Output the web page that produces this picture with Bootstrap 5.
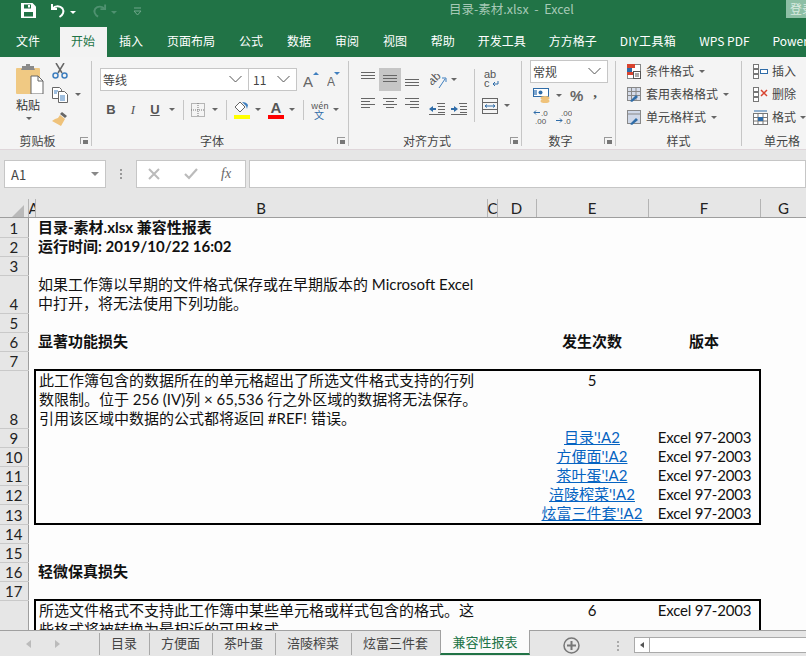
<!DOCTYPE html>
<html lang="zh">
<head>
<meta charset="utf-8">
<title>目录-素材.xlsx - Excel</title>
<link href="https://cdn.jsdelivr.net/npm/bootstrap@5.3.0/dist/css/bootstrap.min.css" rel="stylesheet">
<style>
html,body{margin:0;height:100%;overflow:hidden;background:#e6e6e6}
body{font-family:"Noto Sans CJK SC","Liberation Sans",sans-serif;font-size:12px;color:#444}
svg{display:block;flex:none}
.app{width:806px;height:656px;overflow:hidden}
.titlebar{height:27px;background:#217346;position:relative}
.qat{padding:3px 0 0 21px}
.doc-title{position:absolute;left:449px;top:0;line-height:18px;font-size:12.5px;color:#a6c9b6;white-space:pre}
.login-btn{position:absolute;right:0;top:0;width:20px;height:18px;background:#8dbfa5;color:#d9ebe1;line-height:18px;padding-left:4px;overflow:hidden;font-size:12px;white-space:nowrap}
.cr{display:inline-block;flex:none;width:0;height:0;border-left:3px solid transparent;border-right:3px solid transparent;border-top:3px solid #666}
.cr-w{border-top-color:#fff}
.cr-d{border-top-color:#4f9170}
.tabbar{height:30px;background:#217346}
.rtab{padding:0 12px;color:#fff;line-height:28px;white-space:nowrap;height:30px}
.rtab-t{padding:0 11.5px}
.rtab-l{letter-spacing:.4px}
.rtab-on{background:#f3f3f3;color:#217346;margin-left:8px;padding:0 12px 0 11px}
.rtab-first{margin-left:4px}
.ribbon{height:94px;background:#f4f4f4;border-bottom:1px solid #dfd6da;padding-top:4px;overflow:hidden}
.rg{height:85px;border-right:1px solid #c6c6c6;flex:none}
.rg-body{height:71px;flex:none}
.rg-label{height:18px;line-height:18px;font-size:12px;color:#444;flex:none}
.rg-text{flex:1;text-align:center;padding-right:5px;white-space:nowrap}
.launch{width:8px;height:7px;margin:0 3px 0 0;border-left:1px solid #999;border-top:1px solid #999;position:relative;align-self:center}
.launch::after{content:"";position:absolute;right:0;bottom:0;width:5px;height:4px;background:#777}
.g-clip{width:92px}.g-font{width:257px}.g-align{width:173px}.g-num{width:94px}.g-style{width:126px}.g-cell{width:80px;border-right:0}
.paste-col{width:46px;padding:3px 0 0 16px}
.paste-text{width:26px;text-align:center;margin-top:3px;margin-left:-1px;line-height:16px;color:#333}
.clip-col{padding:2px 0 0 6px;gap:8px}
.combo{height:23px;background:#fff;border:1px solid #c6c6c6;font-size:12px;line-height:21px;padding:0 2px;color:#444}
.font-name{width:149px}
.font-size{width:49px;margin-left:-1px}
.fmt-btn{width:22px;height:20px;font-size:13px;color:#555}
.vsep{width:1px;background:#c6c6c6;flex:none}
.al-row{height:23px}
.al-btn{width:22px;height:23px}
.al-on{background:#c6c6c6}
.num-combo{width:78px;height:23px;margin:-1px 0 0 8px}
.sty-row{height:23px;padding-left:11px;gap:5px;white-space:nowrap;color:#444}
.cel-row{padding-left:11px;gap:4px}
.fbar{height:49px;padding:10px 0 0 4px;background:#e6e6e6}
.fbox{height:28px;background:#fff;border:1px solid #c6c6c6}
.name-box{width:102px;padding:0 6px;font-size:13px;color:#444}
.grip{width:2px;height:10px;margin:0 14px;background:repeating-linear-gradient(#999 0 2px,transparent 2px 4px)}
.fx-box{width:110px;padding-left:11px;gap:0}
.fx-btn{width:36px}
.fx-txt{font-family:"Liberation Serif",serif;font-style:italic;font-size:14px;color:#666;line-height:26px;padding-left:1px}
.fx-input{flex:1;margin-left:3px}
.sheet-wrap{height:431px;overflow:hidden;background:#e6e6e6;flex:none}
.xgrid{table-layout:fixed;width:807px;background:#fdfdfd;font-family:Lato,"Noto Sans CJK SC",sans-serif;font-size:15px;color:#111;line-height:19px}
.xgrid th{background:#e6e6e6;font-weight:400;text-align:center;padding:0;color:#222;overflow:hidden;white-space:nowrap}
.xhead th{height:18px;line-height:18px;border-bottom:1px solid #9e9e9e;border-right:1px solid #b4b4b4;vertical-align:bottom}
.xgrid tbody th{border-right:1px solid #9e9e9e;border-bottom:1px solid #c9c9c9;vertical-align:bottom;line-height:18px}
.xgrid td{padding:0 3px;height:19px;vertical-align:bottom;white-space:nowrap;overflow:hidden}
.xgrid td.t{vertical-align:top;padding-top:0}
.xgrid td.c{text-align:center;padding:0}
.xgrid td.ver{letter-spacing:-.2px;padding-left:2px}
.xgrid a{color:#0563c1}
.xgrid .b{font-weight:700}
.h38>*{height:38px!important}
.h56>*{height:56px!important}
.h18>*{height:18px!important}
.bl{border-left:2px solid #000}
.br{border-right:2px solid #000}
.bt{border-top:2px solid #000}
.bb{border-bottom:2px solid #000}
.sheetbar{height:26px;background:#e6e6e6;border-top:1px solid #a0a0a0;font-size:13px;color:#444;flex:none}
.nav-arrows{width:100px;padding-left:26px;gap:24px;border-right:1px solid #a8a8a8;height:22px;margin-top:2px}
.stab{padding:0 12px 0 11px;height:22px;margin-top:2px;line-height:20px;border-right:1px solid #a8a8a8;white-space:nowrap}
.stab-on{background:#fbfbfb;color:#217346;margin-top:-1px;height:25px;border-left:1px solid #a0a0a0;border-right:1px solid #a0a0a0;border-bottom:2px solid #217346;line-height:24px;padding:0 11.5px;margin-left:-1px;margin-bottom:1px}
.plus-wrap{padding-left:33px;padding-top:6px}
.sgrip{width:2px;height:10px;margin:10px 15px 0 37px;background:repeating-linear-gradient(#aaa 0 2px,transparent 2px 4px)}
.sc-arrow{width:16px;height:16px;margin-top:6px;background:#fff;border:1px solid #aaa;padding-left:5px}
.sc-arrow i{display:block;width:0;height:0;border-top:3px solid transparent;border-bottom:3px solid transparent;border-right:4px solid #555;margin-top:4px}
.sc-track{flex:1;height:16px;margin-top:6px;background:#fff;border:1px solid #aaa;border-left:0;border-right:0}
</style>
</head>
<body>
<div class="app d-flex flex-column">

  <!-- title bar -->
  <div class="titlebar flex-none">
    <div class="qat d-flex align-items-start">
      <svg width="15" height="15" viewBox="0 0 15 15"><path fill="#fff" d="M0 0h11.500L15 3.500V15H0z"/><rect x="3" y="1.500" width="7" height="4" fill="#217346"/><rect x="7" y="2" width="2" height="2.500" fill="#fff"/><rect x="3" y="9" width="9" height="4.500" fill="#217346"/></svg>
      <svg style="margin-left:14px" width="16" height="15" viewBox="0 0 16 15" fill="none" stroke="#fff" stroke-width="2"><path d="M2 1v5h5"/><path d="M2.500 6C5 2.500 10 2.500 12.500 5.500 14.500 8.500 13 12 9.500 14"/></svg>
      <span class="cr cr-w mt-2 ms-1"></span>
      <svg class="ms-3" width="15" height="15" viewBox="0 0 16 15" fill="none" stroke="#4f9170" stroke-width="2"><path d="M14 1v5H9"/><path d="M13.500 6C11 2.500 6 2.500 3.500 5.500 1.500 8.500 3 12 6.500 14"/></svg>
      <span class="cr cr-d mt-2 ms-1"></span>
      <svg class="ms-3 mt-1" width="9" height="9" viewBox="0 0 9 9"><path d="M1 1h7" stroke="#6fa68a" stroke-width="1"/><path d="M1 4h7L4.500 8z" fill="none" stroke="#6fa68a"/></svg>
    </div>
    <div class="doc-title">目录-素材.xlsx  -  Excel</div>
    <div class="login-btn">登录</div>
  </div>

  <!-- ribbon tabs -->
  <div class="tabbar d-flex flex-none">
    <div class="rtab rtab-first">文件</div>
    <div class="rtab rtab-on">开始</div>
    <div class="rtab">插入</div>
    <div class="rtab">页面布局</div>
    <div class="rtab">公式</div>
    <div class="rtab">数据</div>
    <div class="rtab">审阅</div>
    <div class="rtab">视图</div>
    <div class="rtab rtab-t">帮助</div>
    <div class="rtab rtab-t">开发工具</div>
    <div class="rtab rtab-t">方方格子</div>
    <div class="rtab rtab-t rtab-l">DIY工具箱</div>
    <div class="rtab rtab-t">WPS PDF</div>
    <div class="rtab rtab-t">Power</div>
  </div>

  <!-- ribbon -->
  <div class="ribbon d-flex flex-none">

    <!-- clipboard -->
    <div class="rg g-clip d-flex flex-column">
      <div class="rg-body d-flex">
        <div class="paste-col d-flex flex-column">
          <svg width="28" height="30" viewBox="0 0 28 30"><rect x="0" y="4" width="24" height="26" rx="1" fill="#f0c983"/><path d="M6 4V2h4V0h4v2h4v2l1 2H5z" fill="#8a8a8a"/><path d="M15 12h7l5 5v13H15z" fill="#fff" stroke="#666"/><path d="M22 12v5h5" fill="none" stroke="#666"/></svg>
          <div class="paste-text">粘贴</div>
          <span class="cr mt-1" style="margin-left:10px"></span>
        </div>
        <div class="clip-col d-flex flex-column">
          <svg width="16" height="16" viewBox="0 0 16 16" fill="none"><path d="M4 0l6 10M12 0L6 10" stroke="#666" stroke-width="1.500"/><circle cx="3.500" cy="12.500" r="2.500" stroke="#3f7fbf" stroke-width="1.500"/><circle cx="12.500" cy="12.500" r="2.500" stroke="#3f7fbf" stroke-width="1.500"/></svg>
          <div class="d-flex align-items-center">
            <svg width="16" height="16" viewBox="0 0 16 16" fill="#fff" stroke="#666"><path d="M.5.500h7l2 2v9h-9z"/><path d="M6.500 4.500h6l3 3v8h-9z"/><path d="M8 9h5M8 11h5M8 13h5M2 4h4M2 6h3" stroke="#3f7fbf"/></svg>
            <span class="cr" style="margin-left:7px"></span>
          </div>
          <svg width="17" height="15" viewBox="0 0 17 15"><path d="M10 1l5 4-2 2-5-4z" fill="#666"/><path d="M8 4l5 4-4 7-9-5 3-2 3-1z" fill="#efc27a"/></svg>
        </div>
      </div>
      <div class="rg-label d-flex"><span class="rg-text">剪贴板</span><span class="launch"></span></div>
    </div>

    <!-- font -->
    <div class="rg g-font d-flex flex-column">
      <div class="rg-body" style="padding:7px 0 0 8px">
        <div class="d-flex align-items-center">
          <div class="combo font-name d-flex justify-content-between align-items-center"><span>等线</span><svg class="me-1" width="13" height="8" viewBox="0 0 13 8" fill="none" stroke="#555"><path d="M.5 1l6 6 6-6"/></svg></div>
          <div class="combo font-size d-flex justify-content-between align-items-center"><span style="padding-left:2px">11</span><svg class="me-1" width="13" height="8" viewBox="0 0 13 8" fill="none" stroke="#555"><path d="M.5 1l6 6 6-6"/></svg></div>
          <svg style="margin-left:6px" width="16" height="17" viewBox="0 0 16 17"><text x="0" y="16" font-size="15" font-family="Liberation Sans" fill="#666">A</text><path d="M10 4l3-3 3 3z" fill="#3f7fbf"/></svg>
          <svg style="margin-left:8px" width="13" height="15" viewBox="0 0 13 15"><text x="0" y="14" font-size="12" font-family="Liberation Sans" fill="#666">A</text><path d="M7 0h6l-3 3z" fill="#3f7fbf"/></svg>
        </div>
        <div class="d-flex align-items-center" style="margin-top:9px;height:20px">
          <div class="fmt-btn text-center fw-bold" style="font-family:'Liberation Sans'">B</div>
          <div class="fmt-btn text-center fst-italic" style="font-family:'Liberation Serif'">I</div>
          <div class="fmt-btn text-center text-decoration-underline" style="font-family:'Liberation Sans';font-weight:700">U</div>
          <span class="cr" style="margin-left:3px"></span>
          <span class="vsep" style="height:20px;margin:0 7px 0 8px"></span>
          <svg width="14" height="14" viewBox="0 0 14 14" fill="none" stroke="#777" stroke-dasharray="1 1"><rect x=".5" y=".5" width="13" height="13"/><path d="M7 0v14M0 7h14"/></svg>
          <span class="cr" style="margin-left:7px"></span>
          <span class="vsep" style="height:20px;margin:0 7px 0 8px"></span>
          <div style="width:16px">
            <svg width="16" height="14" viewBox="0 0 16 14"><path d="M6 1L1 6l5 5 5-5z" fill="#fff" stroke="#666"/><path d="M8 1c3 0 5 1 6 3l-1 4-1-3z" fill="#3f7fbf"/></svg>
            <div style="height:4px;background:#ff0"></div>
          </div>
          <span class="cr" style="margin-left:5px"></span>
          <div class="text-center" style="width:16px;margin-left:7px;line-height:14px">
            <div class="fw-bold" style="font-family:'Liberation Sans';font-size:15px;color:#555;height:14px">A</div>
            <div style="height:4px;background:#f00"></div>
          </div>
          <span class="cr" style="margin-left:5px"></span>
          <span class="vsep" style="height:20px;margin:0 7px 0 8px"></span>
          <div class="text-center" style="width:16px;line-height:9px;font-size:9px;color:#555"><div>wén</div><div style="color:#2f6ca8;font-size:10px">文</div></div>
          <span class="cr" style="margin-left:6px"></span>
        </div>
      </div>
      <div class="rg-label d-flex"><span class="rg-text">字体</span><span class="launch"></span></div>
    </div>

    <!-- alignment -->
    <div class="rg g-align d-flex flex-column">
      <div class="rg-body d-flex" style="padding:7px 0 0 8px">
        <div style="width:117px">
          <div class="al-row d-flex align-items-center">
            <div class="al-btn d-flex justify-content-center"><svg class="mt-1" width="14" height="8" viewBox="0 0 14 8" stroke="#666"><path d="M0 .5h14M0 3.500h14M0 6.500h14"/></svg></div>
            <div class="al-btn al-on d-flex justify-content-center align-items-center"><svg width="14" height="8" viewBox="0 0 14 8" stroke="#666"><path d="M0 .5h14M0 3.500h14M0 6.500h14"/></svg></div>
            <div class="al-btn d-flex justify-content-center align-items-end pb-1"><svg width="14" height="8" viewBox="0 0 14 8" stroke="#666"><path d="M0 .5h14M0 3.500h14M0 6.500h14"/></svg></div>
            <svg style="margin-left:7px;margin-top:4px" width="17" height="15" viewBox="0 0 17 15"><text transform="translate(2 12) rotate(-45)" font-size="12" font-family="Liberation Sans" fill="#555">ab</text><path d="M9 14L15 5M12 4l4 0 0 4" fill="none" stroke="#3f7fbf"/></svg>
            <span class="cr" style="margin-left:4px"></span>
          </div>
          <div class="al-row d-flex align-items-center" style="margin-top:7px">
            <div class="al-btn d-flex justify-content-center"><svg width="14" height="11" viewBox="0 0 14 11" stroke="#666"><path d="M0 .5h14M0 3.500h9M0 6.500h14M0 9.500h9"/></svg></div>
            <div class="al-btn d-flex justify-content-center"><svg width="14" height="11" viewBox="0 0 14 11" stroke="#666"><path d="M0 .5h14M3 3.500h8M0 6.500h14M3 9.500h8"/></svg></div>
            <div class="al-btn d-flex justify-content-center"><svg width="14" height="11" viewBox="0 0 14 11" stroke="#666"><path d="M0 .5h14M5 3.500h9M0 6.500h14M5 9.500h9"/></svg></div>
            <svg style="margin-left:6px" width="16" height="12" viewBox="0 0 16 12"><path d="M0 6l4-3v2h3v2H4v2z" fill="#2f6ca8"/><path d="M8 .5h8M9 3.500h7M9 6.500h7M9 9.500h7M0 11.500h16" stroke="#666"/></svg>
            <svg style="margin-left:6px" width="16" height="12" viewBox="0 0 16 12"><path d="M7 6L3 3v2H0v2h3v2z" fill="#2f6ca8"/><path d="M8 .5h8M9 3.500h7M9 6.500h7M9 9.500h7M0 11.500h16" stroke="#666"/></svg>
          </div>
        </div>
        <span class="vsep" style="height:53px;margin:1px 7px 0 0"></span>
        <div style="width:30px">
          <div style="font-family:'Liberation Sans';font-size:11px;line-height:9px;color:#555;height:23px;padding:2px 0 0 2px">ab<div class="d-flex"><span>c</span><svg style="margin:2px 0 0 2px" width="7" height="6" viewBox="0 0 7 6" fill="none" stroke="#2f6ca8"><path d="M6 0v3H1M3 1L1 3l2 2"/></svg></div></div>
          <div class="d-flex align-items-center" style="margin-top:7px">
            <svg width="16" height="16" viewBox="0 0 16 16" fill="none" stroke="#666"><rect x=".5" y=".5" width="15" height="15"/><path d="M0 4.500h16M0 11.500h16"/><path d="M3 8h10M3 8l2-1.500M3 8l2 1.500M13 8l-2-1.500M13 8l-2 1.500" stroke="#2f6ca8"/></svg>
            <span class="cr" style="margin-left:6px"></span>
          </div>
        </div>
      </div>
      <div class="rg-label d-flex"><span class="rg-text">对齐方式</span><span class="launch"></span></div>
    </div>

    <!-- number -->
    <div class="rg g-num d-flex flex-column">
      <div class="rg-body">
        <div class="combo num-combo d-flex justify-content-between align-items-center"><span>常规</span><svg class="me-1" width="13" height="8" viewBox="0 0 13 8" fill="none" stroke="#555"><path d="M.5 1l6 6 6-6"/></svg></div>
        <div class="d-flex align-items-center" style="padding-left:11px;height:20px;margin-top:3px">
          <svg width="17" height="17" viewBox="0 0 17 17"><rect x=".5" y="1.500" width="15" height="8" fill="#fff" stroke="#2f6ca8"/><circle cx="7.500" cy="5.500" r="2" fill="#2f6ca8"/><rect x="1" y="3" width="3" height="5" fill="#7ea6cf"/><ellipse cx="12" cy="11" rx="4.500" ry="2" fill="#efc27a"/><ellipse cx="12" cy="14" rx="4.500" ry="2" fill="#efc27a"/></svg>
          <span class="cr" style="margin-left:6px"></span>
          <span class="fw-bold" style="font-family:'Liberation Sans';font-size:15px;color:#666;margin-left:8px">%</span>
          <span class="fw-bold" style="font-family:'Liberation Serif';font-size:15px;color:#555;margin:-8px 0 0 10px">,</span>
        </div>
        <div class="d-flex align-items-center" style="padding-left:11px;height:18px;margin-top:2px">
          <svg width="16" height="16" viewBox="0 0 16 16" font-family="Liberation Sans" font-size="8" fill="#555"><path d="M7 3.500H1M1 3.500l2-2M1 3.500l2 2" fill="none" stroke="#2f6ca8"/><text x="8" y="6.500">.0</text><text x="2" y="15">.00</text></svg>
          <svg style="margin-left:7px" width="16" height="16" viewBox="0 0 16 16" font-family="Liberation Sans" font-size="8" fill="#555"><text x="5" y="6.500">.00</text><text x="8" y="15">.0</text><path d="M0 11.500h6M6 11.500l-2-2M6 11.500l-2 2" fill="none" stroke="#2f6ca8"/></svg>
        </div>
      </div>
      <div class="rg-label d-flex"><span class="rg-text">数字</span><span class="launch"></span></div>
    </div>

    <!-- styles -->
    <div class="rg g-style d-flex flex-column">
      <div class="rg-body">
        <div class="sty-row d-flex align-items-center" style="margin-top:-1px">
          <svg width="14" height="15" viewBox="0 0 14 15"><rect x=".5" y=".5" width="13" height="14" fill="#fff" stroke="#888"/><rect y="0" width="8" height="4" fill="#d8432f"/><rect y="4" width="5" height="4" fill="#2f6ca8"/><rect y="8" width="6" height="3" fill="#d8432f"/><rect x="6.500" y="7.500" width="7" height="7" fill="#fff" stroke="#555"/><path d="M8 10h4M8 12h4" stroke="#555"/></svg>
          <span>条件格式</span><span class="cr"></span>
        </div>
        <div class="sty-row d-flex align-items-center">
          <svg width="14" height="15" viewBox="0 0 14 15" fill="none" stroke="#888"><rect x=".5" y=".5" width="13" height="13" fill="#d5dcea"/><path d="M0 4.500h14M0 8.500h14M4.500 0v14M9 0v14"/><path d="M3 14l6-6 2 2-6 5z" fill="#2f6ca8" stroke="none"/></svg>
          <span>套用表格格式</span><span class="cr"></span>
        </div>
        <div class="sty-row d-flex align-items-center">
          <svg width="14" height="15" viewBox="0 0 14 15" fill="none" stroke="#888"><rect x=".5" y=".5" width="13" height="13" fill="#cfd8e8"/><path d="M0 4h14"/><path d="M3 14l6-6 2 2-6 5z" fill="#2f6ca8" stroke="none"/></svg>
          <span>单元格样式</span><span class="cr"></span>
        </div>
      </div>
      <div class="rg-label text-center">样式</div>
    </div>

    <!-- cells -->
    <div class="rg g-cell d-flex flex-column">
      <div class="rg-body">
        <div class="sty-row cel-row d-flex align-items-center" style="margin-top:-1px">
          <svg width="15" height="15" viewBox="0 0 15 15" fill="#fff" stroke="#777"><rect x=".5" y=".5" width="5" height="4"/><rect x=".5" y="10.500" width="5" height="4"/><rect x=".5" y="5.500" width="5" height="4"/><rect x="7.500" y="5.500" width="7" height="4" stroke="#2f6ca8"/></svg>
          <span>插入</span>
        </div>
        <div class="sty-row cel-row d-flex align-items-center">
          <svg width="15" height="15" viewBox="0 0 15 15" fill="#fff" stroke="#777"><rect x=".5" y=".5" width="5" height="4"/><rect x=".5" y="10.500" width="5" height="4"/><rect x=".5" y="5.500" width="5" height="4"/><path d="M8 3l6 6M14 3l-6 6" stroke="#d8432f" stroke-width="1.500"/></svg>
          <span>删除</span>
        </div>
        <div class="sty-row cel-row d-flex align-items-center">
          <svg width="15" height="15" viewBox="0 0 15 15" fill="#fff" stroke="#777"><rect x=".5" y="3.500" width="14" height="11"/><path d="M0 7.500h15M0 11h15M5 3v12M10 3v12"/><rect x="5" y="7" width="5" height="4" fill="#2f6ca8" stroke="none"/><path d="M1 1h13" stroke="#2f6ca8"/></svg>
          <span>格式</span><span class="cr"></span>
        </div>
      </div>
      <div class="rg-label text-center">单元格</div>
    </div>
  </div>

  <!-- formula bar -->
  <div class="fbar d-flex flex-none">
    <div class="fbox name-box d-flex justify-content-between align-items-center"><span>A1</span><span class="cr" style="border-left-width:4px;border-right-width:4px;border-top-width:4px;border-top-color:#888"></span></div>
    <span class="grip align-self-start" style="margin-top:9px"></span>
    <div class="fbox fx-box d-flex align-items-center">
      <div class="fx-btn"><svg width="12" height="12" viewBox="0 0 12 12" stroke="#bbb" stroke-width="2"><path d="M1 1l10 10M11 1L1 11"/></svg></div>
      <div class="fx-btn"><svg width="14" height="12" viewBox="0 0 14 12" fill="none" stroke="#bbb" stroke-width="2.200"><path d="M1 6l4 4 8-9"/></svg></div>
      <div class="fx-txt">fx</div>
    </div>
    <div class="fbox fx-input"></div>
  </div>

  <!-- worksheet -->
  <div class="sheet-wrap">
    <table class="xgrid">
      <colgroup>
        <col style="width:28px"><col style="width:7px"><col style="width:452px"><col style="width:10px"><col style="width:39px"><col style="width:112px"><col style="width:112px"><col style="width:47px">
      </colgroup>
      <thead>
        <tr class="xhead">
          <th><svg class="ms-auto me-1" width="12" height="12" viewBox="0 0 12 12"><path d="M12 0v12H0z" fill="#b9b9b9"/></svg></th>
          <th class="text-start">A</th><th>B</th><th>C</th><th>D</th><th>E</th><th>F</th><th>G</th>
        </tr>
      </thead>
      <tbody>
        <tr><th>1</th><td></td><td class="b">目录-素材.xlsx 兼容性报表</td><td></td><td></td><td></td><td></td><td></td></tr>
        <tr><th>2</th><td></td><td class="b">运行时间: 2019/10/22 16:02</td><td></td><td></td><td></td><td></td><td></td></tr>
        <tr><th>3</th><td></td><td></td><td></td><td></td><td></td><td></td><td></td></tr>
        <tr class="h38"><th>4</th><td></td><td>如果工作簿以早期的文件格式保存或在早期版本的 Microsoft Excel<br>中打开，将无法使用下列功能。</td><td></td><td></td><td></td><td></td><td></td></tr>
        <tr><th>5</th><td></td><td></td><td></td><td></td><td></td><td></td><td></td></tr>
        <tr><th>6</th><td></td><td class="b">显著功能损失</td><td></td><td></td><td class="c b">发生次数</td><td class="c b">版本</td><td></td></tr>
        <tr><th>7</th><td></td><td></td><td></td><td></td><td></td><td></td><td></td></tr>
        <tr class="h56"><th>8</th><td></td><td class="t bl bt">此工作簿包含的数据所在的单元格超出了所选文件格式支持的行列<br>数限制。位于 256 (IV)列 × 65,536 行之外区域的数据将无法保存。<br>引用该区域中数据的公式都将返回 #REF! 错误。</td><td class="bt"></td><td class="bt"></td><td class="t c bt">5</td><td class="bt br"></td><td></td></tr>
        <tr><th>9</th><td></td><td class="bl"></td><td></td><td></td><td class="c"><a href="#">目录'!A2</a></td><td class="c ver br">Excel 97-2003</td><td></td></tr>
        <tr><th>10</th><td></td><td class="bl"></td><td></td><td></td><td class="c"><a href="#">方便面'!A2</a></td><td class="c ver br">Excel 97-2003</td><td></td></tr>
        <tr><th>11</th><td></td><td class="bl"></td><td></td><td></td><td class="c"><a href="#">茶叶蛋'!A2</a></td><td class="c ver br">Excel 97-2003</td><td></td></tr>
        <tr><th>12</th><td></td><td class="bl"></td><td></td><td></td><td class="c"><a href="#">涪陵榨菜'!A2</a></td><td class="c ver br">Excel 97-2003</td><td></td></tr>
        <tr class="h18"><th>13</th><td></td><td class="bl bb"></td><td class="bb"></td><td class="bb"></td><td class="c bb"><a href="#">炫富三件套'!A2</a></td><td class="c ver br bb">Excel 97-2003</td><td></td></tr>
        <tr><th>14</th><td></td><td></td><td></td><td></td><td></td><td></td><td></td></tr>
        <tr><th>15</th><td></td><td></td><td></td><td></td><td></td><td></td><td></td></tr>
        <tr><th>16</th><td></td><td class="b">轻微保真损失</td><td></td><td></td><td></td><td></td><td></td></tr>
        <tr><th>17</th><td></td><td></td><td></td><td></td><td></td><td></td><td></td></tr>
        <tr class="h56"><th>18</th><td></td><td class="t bl bt">所选文件格式不支持此工作簿中某些单元格或样式包含的格式。这<br>些格式将被转换为最相近的可用格式。</td><td class="bt"></td><td class="bt"></td><td class="t c bt">6</td><td class="t c ver bt br">Excel 97-2003</td><td></td></tr>
      </tbody>
    </table>
  </div>

  <!-- sheet tabs -->
  <div class="sheetbar d-flex">
    <div class="nav-arrows d-flex align-items-center">
      <svg width="5" height="8" viewBox="0 0 5 8"><path d="M5 0v8L0 4z" fill="#bbb"/></svg>
      <svg width="5" height="8" viewBox="0 0 5 8"><path d="M0 0v8l5-4z" fill="#bbb"/></svg>
    </div>
    <div class="stab">目录</div>
    <div class="stab">方便面</div>
    <div class="stab">茶叶蛋</div>
    <div class="stab">涪陵榨菜</div>
    <div class="stab">炫富三件套</div>
    <div class="stab stab-on">兼容性报表</div>
    <div class="plus-wrap"><svg width="17" height="17" viewBox="0 0 17 17" fill="none" stroke="#777"><circle cx="8.500" cy="8.500" r="7.500" stroke-width="1.500"/><path d="M8.500 4v9M4 8.500h9" stroke-width="2"/></svg></div>
    <span class="sgrip"></span>
    <div class="sc-arrow"><i></i></div>
    <div class="sc-track"></div>
  </div>
</div>
<script src="https://cdn.jsdelivr.net/npm/bootstrap@5.3.0/dist/js/bootstrap.bundle.min.js"></script>
</body>
</html>
